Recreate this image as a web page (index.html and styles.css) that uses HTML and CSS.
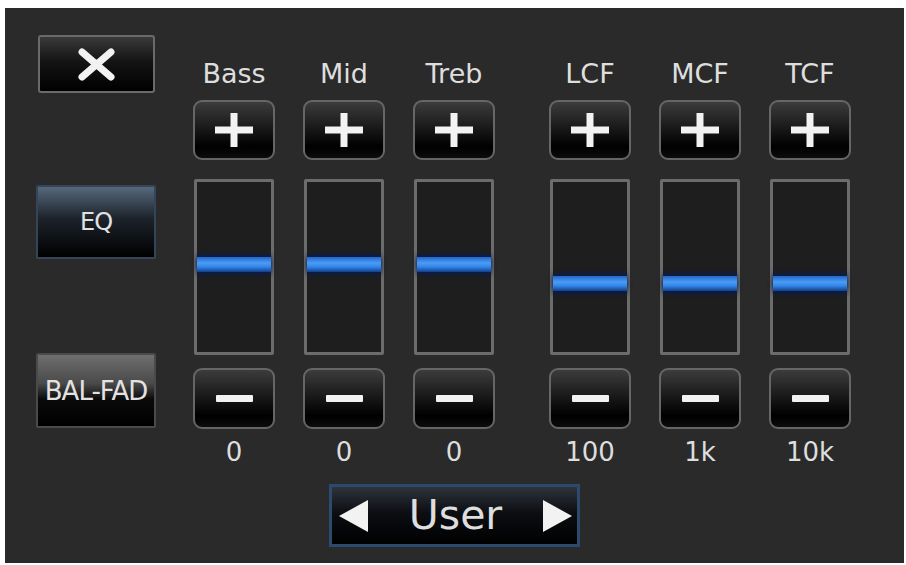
FILE: index.html
```html
<!DOCTYPE html>
<html lang="en">

<head>
    <meta charset="UTF-8">
    <meta name="viewport" content="width=device-width, initial-scale=1.0">
    <title>Sound Settings</title>
    <link rel="stylesheet" href="styles.css">
</head>

<body>
    <div class="panel">
        <div class="top">
            <div class="side">
                <button class="btn close-btn">
                    <svg width="37" height="33" viewBox="0 0 37 33"><path d="M4 4 L33 29 M33 4 L4 29" stroke="#f2f2f2" stroke-width="7" stroke-linecap="round"/></svg>
                </button>
                <button class="btn mode-btn eq-btn">EQ</button>
                <button class="btn mode-btn bal-btn">BAL-FAD</button>
            </div>

            <div class="columns">
                <div class="group">
                    <div class="col">
                        <div class="label">Bass</div>
                        <button class="btn step"><svg width="38" height="34" viewBox="0 0 38 34"><path d="M0 17 H38 M19 0 V34" stroke="#f2f2f2" stroke-width="7"/></svg></button>
                        <div class="track"><span class="knob level-eq"></span></div>
                        <button class="btn step"><span class="dash"></span></button>
                        <div class="value">0</div>
                    </div>
                    <div class="col">
                        <div class="label">Mid</div>
                        <button class="btn step"><svg width="38" height="34" viewBox="0 0 38 34"><path d="M0 17 H38 M19 0 V34" stroke="#f2f2f2" stroke-width="7"/></svg></button>
                        <div class="track"><span class="knob level-eq"></span></div>
                        <button class="btn step"><span class="dash"></span></button>
                        <div class="value">0</div>
                    </div>
                    <div class="col">
                        <div class="label">Treb</div>
                        <button class="btn step"><svg width="38" height="34" viewBox="0 0 38 34"><path d="M0 17 H38 M19 0 V34" stroke="#f2f2f2" stroke-width="7"/></svg></button>
                        <div class="track"><span class="knob level-eq"></span></div>
                        <button class="btn step"><span class="dash"></span></button>
                        <div class="value">0</div>
                    </div>
                </div>

                <div class="group">
                    <div class="col">
                        <div class="label">LCF</div>
                        <button class="btn step"><svg width="38" height="34" viewBox="0 0 38 34"><path d="M0 17 H38 M19 0 V34" stroke="#f2f2f2" stroke-width="7"/></svg></button>
                        <div class="track"><span class="knob level-cf"></span></div>
                        <button class="btn step"><span class="dash"></span></button>
                        <div class="value">100</div>
                    </div>
                    <div class="col">
                        <div class="label">MCF</div>
                        <button class="btn step"><svg width="38" height="34" viewBox="0 0 38 34"><path d="M0 17 H38 M19 0 V34" stroke="#f2f2f2" stroke-width="7"/></svg></button>
                        <div class="track"><span class="knob level-cf"></span></div>
                        <button class="btn step"><span class="dash"></span></button>
                        <div class="value">1k</div>
                    </div>
                    <div class="col">
                        <div class="label">TCF</div>
                        <button class="btn step"><svg width="38" height="34" viewBox="0 0 38 34"><path d="M0 17 H38 M19 0 V34" stroke="#f2f2f2" stroke-width="7"/></svg></button>
                        <div class="track"><span class="knob level-cf"></span></div>
                        <button class="btn step"><span class="dash"></span></button>
                        <div class="value">10k</div>
                    </div>
                </div>
            </div>
        </div>

        <div class="preset">
            <svg width="29" height="32" viewBox="0 0 29 32"><polygon points="29,0 29,32 0,16" fill="#f2f2f2"/></svg>
            <span class="preset-name">User</span>
            <svg width="29" height="32" viewBox="0 0 29 32"><polygon points="0,0 0,32 29,16" fill="#f2f2f2"/></svg>
        </div>
    </div>
</body>

</html>
```

FILE: styles.css
```css
body {
    margin: 0;
    padding: 0;
    background-color: #fff;
    font-family: "DejaVu Sans", sans-serif;
    color: #dedede;
}

.panel {
    margin: 8px 0 0 5px;
    width: 899px;
    height: 555px;
    background-color: #2a2a2a;
    display: flex;
    flex-direction: column;
}

.top {
    display: flex;
    align-items: flex-start;
}

.btn {
    display: flex;
    align-items: center;
    justify-content: center;
    box-sizing: border-box;
    padding: 0;
    font-family: inherit;
    color: #e2e2e2;
    cursor: pointer;
}

/* left side buttons */
.side {
    width: 120px;
    margin-left: 31px;
    padding-top: 27px;
    display: flex;
    flex-direction: column;
}

.close-btn {
    width: 117px;
    height: 58px;
    margin-left: 2px;
    border: 2px solid #6a6a6a;
    border-radius: 3px;
    background: linear-gradient(#3a3a3a, #141414 45%, #000 100%);
}

.mode-btn {
    width: 120px;
    border-radius: 2px;
    font-size: 26px;
    letter-spacing: -1px;
}

.eq-btn {
    height: 74px;
    margin-top: 92px;
    font-size: 24px;
    border: 2px solid #34455a;
    background: linear-gradient(#56687a, #1d232b 45%, #000 100%);
}

.bal-btn {
    height: 75px;
    margin-top: 94px;
    border: 2px solid #4a4a4a;
    background: linear-gradient(#6e6e6e, #4a4a4a 40%, #0a0a0a 62%, #000 100%);
}

/* slider columns */
.columns {
    display: flex;
    gap: 54px;
    margin-left: 37px;
    padding-top: 48px;
}

.group {
    display: flex;
    gap: 28px;
}

.col {
    width: 82px;
    display: flex;
    flex-direction: column;
    align-items: center;
}

.label {
    height: 36px;
    line-height: 36px;
    font-size: 27px;
    margin-bottom: 8px;
}

.step {
    width: 82px;
    height: 60px;
    border: 2px solid #666;
    border-radius: 9px;
    background: linear-gradient(#3c3c3c, #1a1a1a 45%, #000 80%, #0c0c0c 100%);
}

.dash {
    display: block;
    width: 37px;
    height: 7px;
    background-color: #f2f2f2;
    border-radius: 1px;
}

.track {
    position: relative;
    width: 80px;
    height: 176px;
    margin: 19px 0 13px;
    box-sizing: border-box;
    border: 3px solid #6c6c6c;
    border-radius: 2px;
    background-color: #1e1e1e;
}

.knob {
    position: absolute;
    left: 0;
    right: 0;
    height: 15px;
    background: linear-gradient(#2266c8, #4a9cf6 40%, #3386ea 65%, #123f8a 100%);
    box-shadow: 0 -3px 4px rgba(8, 30, 80, 0.8), 0 3px 4px rgba(8, 30, 80, 0.8);
}

.level-eq {
    top: 75px;
}

.level-cf {
    top: 94px;
}

.step + .track + .step {
    height: 61px;
}

.value {
    margin-top: 8px;
    height: 30px;
    line-height: 30px;
    font-size: 26px;
}

/* preset selector */
.preset {
    align-self: center;
    width: 251px;
    height: 63px;
    margin-top: 17px;
    box-sizing: border-box;
    border: 3px solid #2c4a6e;
    background: linear-gradient(#2e333c, #0c0e12 45%, #000 100%);
    display: flex;
    align-items: center;
    justify-content: space-between;
    padding: 0 5px 0 7px;
}

.preset-name {
    font-size: 41px;
    line-height: 1;
}
```
